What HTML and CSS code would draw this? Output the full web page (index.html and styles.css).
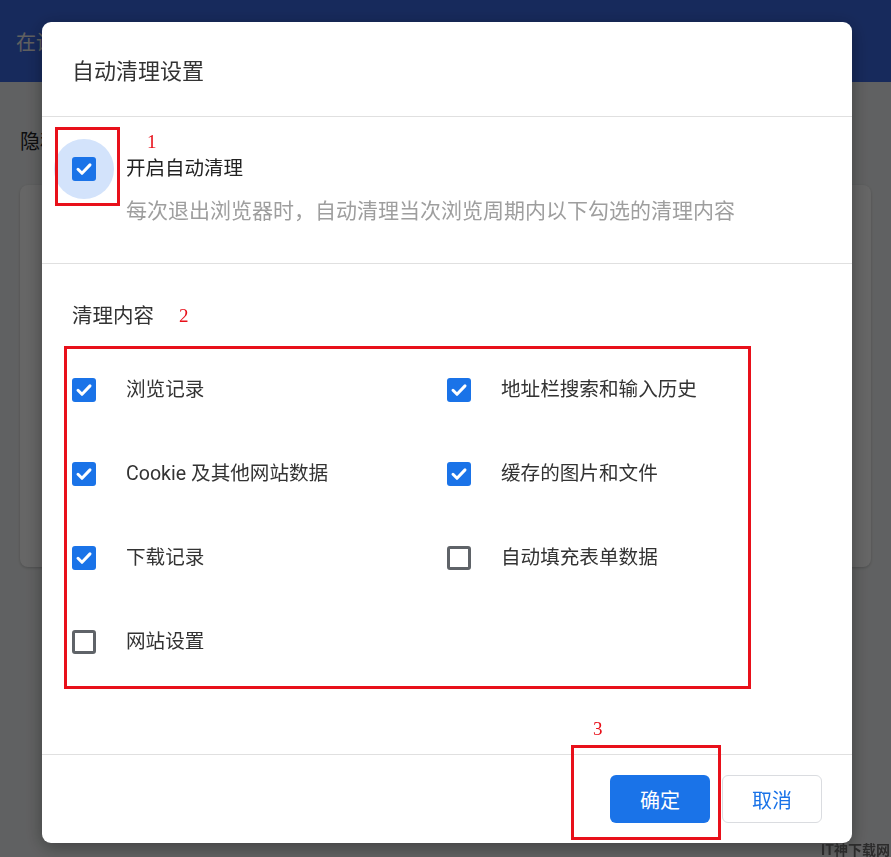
FILE: index.html
```html
<!DOCTYPE html>
<html lang="zh-CN">
<head>
    <meta charset="UTF-8">
    <meta name="viewport" content="width=device-width, initial-scale=1.0">
    <title>自动清理设置</title>
    <link rel="stylesheet" href="styles.css">
</head>
<body>
    <div class="page">
        <header class="topbar">
            <span class="search-hint">在设置中搜索</span>
        </header>
        <main class="page-main">
            <h2 class="page-title">隐私设置和安全性</h2>
            <div class="page-card"></div>
        </main>
    </div>

    <div class="scrim"></div>

    <div class="dialog">
        <div class="dialog-head">
            <h1>自动清理设置</h1>
        </div>

        <section class="toggle-section">
            <div class="toggle-row">
                <span class="box-wrap halo">
                    <span class="box on"><svg viewBox="0 0 24 24"><path d="M6 12.3l4 4 8-8.4"/></svg></span>
                    <span class="mark-box mark-1"></span>
                    <span class="mark-num num-1">1</span>
                </span>
                <div class="toggle-text">
                    <div class="toggle-label">开启自动清理</div>
                    <div class="toggle-desc">每次退出浏览器时，自动清理当次浏览周期内以下勾选的清理内容</div>
                </div>
            </div>
        </section>

        <section class="items-section">
            <div class="items-title">清理内容<span class="mark-num num-2">2</span></div>
            <div class="items-frame">
                <div class="items-grid">
                    <div class="item">
                        <span class="box on"><svg viewBox="0 0 24 24"><path d="M6 12.3l4 4 8-8.4"/></svg></span>
                        <span class="item-label">浏览记录</span>
                    </div>
                    <div class="item">
                        <span class="box on"><svg viewBox="0 0 24 24"><path d="M6 12.3l4 4 8-8.4"/></svg></span>
                        <span class="item-label">地址栏搜索和输入历史</span>
                    </div>
                    <div class="item">
                        <span class="box on"><svg viewBox="0 0 24 24"><path d="M6 12.3l4 4 8-8.4"/></svg></span>
                        <span class="item-label">Cookie 及其他网站数据</span>
                    </div>
                    <div class="item">
                        <span class="box on"><svg viewBox="0 0 24 24"><path d="M6 12.3l4 4 8-8.4"/></svg></span>
                        <span class="item-label">缓存的图片和文件</span>
                    </div>
                    <div class="item">
                        <span class="box on"><svg viewBox="0 0 24 24"><path d="M6 12.3l4 4 8-8.4"/></svg></span>
                        <span class="item-label">下载记录</span>
                    </div>
                    <div class="item">
                        <span class="box off"></span>
                        <span class="item-label">自动填充表单数据</span>
                    </div>
                    <div class="item">
                        <span class="box off"></span>
                        <span class="item-label">网站设置</span>
                    </div>
                </div>
            </div>
        </section>

        <footer class="dialog-foot">
            <span class="btn-wrap">
                <button class="btn btn-primary">确定</button>
                <span class="mark-box mark-3"></span>
                <span class="mark-num num-3">3</span>
            </span>
            <button class="btn btn-plain">取消</button>
        </footer>
    </div>

    <div class="watermark">IT神下载网</div>
</body>
</html>
```

FILE: styles.css
```css
body, html {
    margin: 0;
    padding: 0;
    height: 100%;
    overflow: hidden;
    font-family: Roboto, "Noto Sans CJK SC", sans-serif;
    color: #333;
    background-color: #f1f3f4;
}

/* page behind the dialog */
.topbar {
    height: 82px;
    background-color: #3b6ae6;
    display: flex;
    align-items: center;
    padding-left: 16px;
}

.search-hint {
    font-size: 20px;
    color: #f0f0f0;
}

.page-main {
    padding: 0 20px;
}

.page-title {
    margin: 45px 0 0;
    font-size: 20px;
    line-height: 30px;
    font-weight: normal;
    color: #202124;
}

.page-card {
    margin-top: 28px;
    height: 382px;
    background: #fff;
    border-radius: 8px;
    box-shadow: 0 1px 3px rgba(0, 0, 0, 0.2);
}

.scrim {
    position: fixed;
    inset: 0;
    background: rgba(0, 0, 0, 0.6);
}

/* dialog */
.dialog {
    position: fixed;
    top: 22px;
    left: 42px;
    width: 810px;
    background: #fff;
    border-radius: 9px;
    box-shadow: 0 4px 18px rgba(0, 0, 0, 0.35);
}

.dialog-head {
    height: 95px;
    box-sizing: border-box;
    padding: 6px 30px 0;
    display: flex;
    align-items: center;
    border-bottom: 1px solid #e0e0e0;
}

.dialog-head h1 {
    margin: 0;
    font-size: 22px;
    line-height: 30px;
    font-weight: normal;
    color: #333;
}

.toggle-section {
    height: 147px;
    box-sizing: border-box;
    padding: 40px 30px 0;
    border-bottom: 1px solid #e0e0e0;
}

.toggle-row {
    display: flex;
    gap: 30px;
}

.toggle-label {
    font-size: 19.5px;
    line-height: 24px;
    color: #222;
}

.toggle-desc {
    margin-top: 15px;
    font-size: 21px;
    line-height: 30px;
    color: #9e9e9e;
}

/* checkboxes */
.box-wrap {
    position: relative;
    width: 24px;
    height: 24px;
    flex-shrink: 0;
}

.halo::before {
    content: "";
    position: absolute;
    left: -18px;
    top: -18px;
    width: 60px;
    height: 60px;
    border-radius: 50%;
    background: #d3e3fb;
}

.box {
    position: relative;
    display: block;
    width: 24px;
    height: 24px;
    box-sizing: border-box;
    border-radius: 3px;
    flex-shrink: 0;
}

.box.on {
    background: #1a73e8;
}

.box.off {
    border: 3px solid #5f6368;
    background: #fff;
}

.box svg {
    display: block;
    width: 24px;
    height: 24px;
}

.box path {
    fill: none;
    stroke: #fff;
    stroke-width: 3;
    stroke-linecap: round;
    stroke-linejoin: round;
}

.items-section {
    height: 491px;
    box-sizing: border-box;
    padding: 37px 30px 0;
    border-bottom: 1px solid #e0e0e0;
}

.items-title {
    font-size: 20.5px;
    line-height: 30px;
    color: #333;
}

.items-frame {
    margin: 15px 0 0 -8px;
    width: 687px;
    box-sizing: border-box;
    border: 3px solid #e8101a;
    padding: 0 0 2px 5px;
}

.items-grid {
    margin-top: -1px;
    display: grid;
    grid-template-columns: 375px 1fr;
    grid-auto-rows: 84px;
}

.item {
    display: flex;
    align-items: center;
    gap: 30px;
}

.item-label {
    font-size: 19.6px;
    line-height: 24px;
    color: #333;
}

.dialog-foot {
    height: 88px;
    box-sizing: border-box;
    padding: 20px 30px 0;
    display: flex;
    justify-content: flex-end;
    gap: 12px;
}

.btn-wrap {
    position: relative;
}

.btn {
    display: block;
    width: 100px;
    height: 48px;
    border-radius: 6px;
    font-family: Roboto, "Noto Sans CJK SC", sans-serif;
    font-size: 20px;
    cursor: pointer;
}

.btn-primary {
    border: none;
    background: #1a73e8;
    color: #fff;
}

.btn-plain {
    border: 1px solid #dadce0;
    background: #fff;
    color: #1a73e8;
}

/* red annotations */
.mark-box {
    position: absolute;
    box-sizing: border-box;
    border: 3px solid #e8101a;
    pointer-events: none;
}

.mark-1 {
    left: -17px;
    top: -30px;
    width: 65px;
    height: 79px;
}

.mark-3 {
    left: -39px;
    top: -30px;
    width: 150px;
    height: 95px;
}

.mark-num {
    font-family: "Liberation Serif", serif;
    font-size: 19px;
    line-height: 1;
    color: #e8101a;
}

.num-1 {
    position: absolute;
    left: 75px;
    top: -25px;
}

.num-2 {
    margin-left: 25px;
    vertical-align: 1px;
}

.num-3 {
    position: absolute;
    left: -17px;
    top: -56px;
}

.watermark {
    position: fixed;
    right: 1px;
    bottom: 1px;
    font-family: "Noto Sans CJK SC", sans-serif;
    font-size: 14px;
    font-weight: bold;
    line-height: 14px;
    color: #2b2b2b;
}
```
